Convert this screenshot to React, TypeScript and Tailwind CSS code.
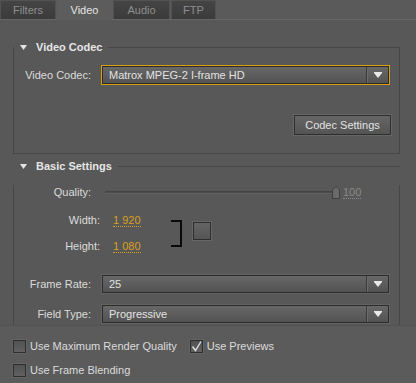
import type { ReactNode } from 'react';

const font = { fontFamily: '"Liberation Sans", Arial, sans-serif' };

const tabs = [
  { label: 'Filters', width: 'w-[56px]', active: false },
  { label: 'Video', width: 'w-[55px]', active: true },
  { label: 'Audio', width: 'w-[57px]', active: false },
  { label: 'FTP', width: 'w-[45px]', active: false },
];

const Arrow = () => (
  <svg width="8" height="6" viewBox="0 0 8 6">
    <rect x="0" y="0" width="8" height="1" fill="#e8e8e8" />
    <polygon points="0,1 8,1 4,6" fill="#e8e8e8" />
  </svg>
);

const Dropdown = ({ value, focused = false }: { value: string; focused?: boolean }) => (
  <div className={`flex h-[20px] w-[289px] border ${focused ? 'border-[#dc9e0a]' : 'border-[#636363]'}`}>
    <div className="flex flex-1 items-center border border-[#2c2c2c] bg-gradient-to-b from-[#676767] to-[#535353]">
      <span className="flex-1 pl-[6px] text-[11px] text-[#e2e2e2]">{value}</span>
      <div className="h-full w-px bg-[#3a3a3a]" />
      <div className="h-full w-px bg-[#6c6c6c]" />
      <div className="flex w-[20px] items-center justify-center">
        <Arrow />
      </div>
    </div>
  </div>
);

const Legend = ({ title }: { title: string }) => (
  <div className="relative z-10 flex h-[14px] items-center">
    <svg width="7" height="5" viewBox="0 0 7 5" className="ml-[7px]">
      <polygon points="0,0 7,0 3.5,5" fill="#e4e4e4" />
    </svg>
    <span className="ml-[9px] text-[11px] font-bold text-[#e6e6e6]">{title}</span>
    <div className="ml-[6px] h-px flex-1 bg-[#474747]" />
  </div>
);

const Group = ({ title, children, className = '' }: { title: string; children: ReactNode; className?: string }) => (
  <section className={`ml-[13px] w-[387px] ${className}`}>
    <Legend title={title} />
    <div className="-mt-[7px] border-x border-b border-[#474747] pr-[8px]">{children}</div>
  </section>
);

const Checkbox = ({ checked = false, label }: { checked?: boolean; label: string }) => (
  <label className="flex h-[16px] items-center">
    <span className="flex h-[13px] w-[13px] items-center justify-center border border-[#2e2e2e] bg-gradient-to-b from-[#525252] to-[#616161] shadow-[0_0_0_1px_#646464]">
      {checked && (
        <svg width="11" height="11" viewBox="0 0 11 11">
          <path d="M1.5 5.5 L4.5 9.5 L10 0.5" stroke="#e4e4e4" strokeWidth="1.3" fill="none" />
        </svg>
      )}
    </span>
    <span className="ml-[4px] text-[11px] text-[#dcdcdc]">{label}</span>
  </label>
);

export default function App() {
  return (
    <div className="h-[383px] w-[416px] overflow-hidden bg-[#5a5a5a] select-none" style={font}>
      <div className="flex h-[20px] border-b border-[#666666]">
        {tabs.map((tab) => (
          <div
            key={tab.label}
            className={`${tab.width} mr-[1px] flex items-center justify-center text-[11px] ${
              tab.active
                ? 'relative z-10 -mb-px h-[20px] bg-[#5c5c5c] text-[#e4e4e4]'
                : 'h-[19px] border border-b-0 border-[#525252] bg-gradient-to-b from-[#444444] to-[#3b3b3b] text-[#8e8e8e]'
            }`}
          >
            {tab.label}
          </div>
        ))}
      </div>

      <div className="h-[305px] overflow-hidden bg-[#585858] pt-[20px]">
        <Group title="Video Codec">
          <div className="flex items-center pt-[18px]">
            <span className="w-[77px] text-right text-[11px] text-[#dcdcdc]">Video Codec:</span>
            <div className="ml-[10px]">
              <Dropdown value="Matrox MPEG-2 I-frame HD" focused />
            </div>
          </div>
          <div className="flex justify-end pt-[30px] pb-[18px]">
            <button className="h-[20px] w-[97px] border border-[#2e2e2e] bg-gradient-to-b from-[#666666] to-[#545454] text-[11px] text-[#e2e2e2] shadow-[0_0_0_1px_#666666]">
              Codec Settings
            </button>
          </div>
        </Group>

        <Group title="Basic Settings" className="mt-[5px]">
          <div className="mt-[19px] flex h-[14px] items-center">
            <span className="w-[77px] text-right text-[11px] text-[#dcdcdc]">Quality:</span>
            <div className="ml-[14px] flex w-[235px] items-center">
              <div className="flex h-[3px] flex-1 flex-col">
                <div className="h-px bg-[#444444]" />
                <div className="h-px bg-[#4c4c4c]" />
                <div className="h-px bg-[#626262]" />
              </div>
              <svg width="8" height="13" viewBox="0 0 8 13" className="-ml-[2px]">
                <polygon points="0.5,12.5 0.5,4 4,0.5 7.5,4 7.5,12.5" fill="#6a6a6a" stroke="#3e3e3e" />
              </svg>
            </div>
            <span className="ml-[3px] border-b border-dotted border-[#8a8a8a] text-[11px] leading-[12px] text-[#8a8a8a]">
              100
            </span>
          </div>

          <div className="mt-[11px] flex items-center">
            <div className="flex flex-col gap-[6px]">
              {[
                ['Width:', '1 920'],
                ['Height:', '1 080'],
              ].map(([label, value]) => (
                <div key={label} className="flex h-[20px] items-center">
                  <span className="w-[86px] text-right text-[11px] text-[#dcdcdc]">{label}</span>
                  <span className="ml-[13px] border-b border-dotted border-[#d9a020] text-[11px] leading-[12px] text-[#d9a020]">
                    {value}
                  </span>
                </div>
              ))}
            </div>
            <svg width="12" height="27" viewBox="0 0 12 27" className="ml-[30px]">
              <path d="M0 1 H10 V26 H0" stroke="#0a0a0a" strokeWidth="2" fill="none" />
            </svg>
            <div className="-mt-[4px] ml-[10px] h-[18px] w-[18px] border border-[#2e2e2e] bg-gradient-to-b from-[#646464] to-[#555555] shadow-[0_0_0_1px_#666666]" />
          </div>

          <div className="mt-[18px] flex items-center">
            <span className="w-[77px] text-right text-[11px] text-[#dcdcdc]">Frame Rate:</span>
            <div className="ml-[10px]">
              <Dropdown value="25" />
            </div>
          </div>
          <div className="mt-[10px] flex items-center">
            <span className="w-[77px] text-right text-[11px] text-[#dcdcdc]">Field Type:</span>
            <div className="ml-[10px]">
              <Dropdown value="Progressive" />
            </div>
          </div>
          <div className="h-[40px]" />
        </Group>
      </div>

      <div className="h-[58px] border-t border-[#525252] bg-[#5b5b5b] pl-[13px] pt-[12px]">
        <div className="flex items-center">
          <Checkbox label="Use Maximum Render Quality" />
          <div className="ml-[13px]">
            <Checkbox checked label="Use Previews" />
          </div>
        </div>
        <div className="mt-[8px]">
          <Checkbox label="Use Frame Blending" />
        </div>
      </div>
    </div>
  );
}
